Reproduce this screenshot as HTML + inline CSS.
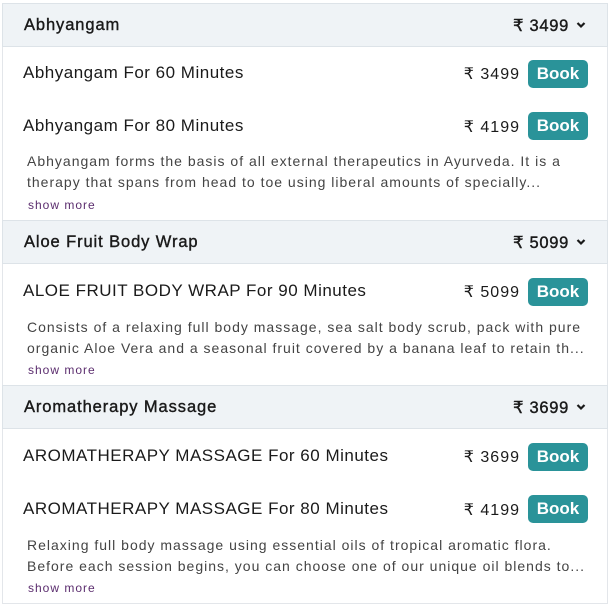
<!DOCTYPE html>
<html><head><meta charset="utf-8"><style>
*{margin:0;padding:0;box-sizing:border-box}
body{width:612px;height:607px;background:#fff;font-family:"Liberation Sans",sans-serif;color:#1a1a1a;position:relative;overflow:hidden}
.hd{position:absolute;left:2px;width:606px;height:44px;background:#eff3f6;border:1px solid #dde3e8}
.hd .t{position:absolute;left:21px;top:12px;font-size:16.5px;letter-spacing:0.9px;-webkit-text-stroke:0.4px #1a1a1a;color:#1a1a1a}
.hd .p{position:absolute;right:22px;top:12px;font-size:16.5px;letter-spacing:0.7px;-webkit-text-stroke:0.4px #1a1a1a}
.hd svg{position:absolute;right:21px;top:17px}
.bd{position:absolute;left:2px;width:606px;background:#fff;border-right:1px solid #e3e6ea;border-left:1px solid #e3e6ea}
.row{position:absolute;left:23px;font-size:17px;letter-spacing:0.5px}
.pr{position:absolute;right:92px;font-size:16px;letter-spacing:1px}
.bk{position:absolute;left:528px;width:60px;height:28px;background:#2a9399;color:#fff;border-radius:5px;font-weight:bold;font-size:17px;text-align:center;line-height:28px}
.ds{position:absolute;left:27px;font-size:14px;color:#444;line-height:21px;width:580px;white-space:nowrap;letter-spacing:1px}
.sm{position:absolute;left:28px;font-size:12px;color:#5b2d6e;letter-spacing:1px}
</style></head><body>
<div class="bd" style="top:46px;height:175px"></div>
<div class="bd" style="top:264px;height:121px"></div>
<div class="bd" style="top:429px;height:175px;border-bottom:1px solid #e3e6ea"></div>

<div class="hd" style="top:3px"><span class="t">Abhyangam</span><span class="p" style="right:38px">₹ 3499</span><svg width="10" height="8" viewBox="0 0 10 8"><path d="M1.5 2 L5 5.5 L8.5 2" stroke="#1a1a1a" stroke-width="2.2" fill="none"/></svg></div>
<div class="row" style="top:63px">Abhyangam For 60 Minutes</div><div class="pr" style="top:64px">₹ 3499</div><div class="bk" style="top:60px">Book</div>
<div class="row" style="top:116px">Abhyangam For 80 Minutes</div><div class="pr" style="top:117px">₹ 4199</div><div class="bk" style="top:112px">Book</div>
<div class="ds" style="top:151px">Abhyangam forms the basis of all external therapeutics in Ayurveda. It is a<br>therapy that spans from head to toe using liberal amounts of specially...</div>
<div class="sm" style="top:198px">show more</div>

<div class="hd" style="top:220px"><span class="t">Aloe Fruit Body Wrap</span><span class="p" style="right:38px">₹ 5099</span><svg width="10" height="8" viewBox="0 0 10 8"><path d="M1.5 2 L5 5.5 L8.5 2" stroke="#1a1a1a" stroke-width="2.2" fill="none"/></svg></div>
<div class="row" style="top:281px">ALOE FRUIT BODY WRAP For 90 Minutes</div><div class="pr" style="top:282px">₹ 5099</div><div class="bk" style="top:278px">Book</div>
<div class="ds" style="top:317px">Consists of a relaxing full body massage, sea salt body scrub, pack with pure<br>organic Aloe Vera and a seasonal fruit covered by a banana leaf to retain th...</div>
<div class="sm" style="top:363px">show more</div>

<div class="hd" style="top:385px"><span class="t">Aromatherapy Massage</span><span class="p" style="right:38px">₹ 3699</span><svg width="10" height="8" viewBox="0 0 10 8"><path d="M1.5 2 L5 5.5 L8.5 2" stroke="#1a1a1a" stroke-width="2.2" fill="none"/></svg></div>
<div class="row" style="top:446px">AROMATHERAPY MASSAGE For 60 Minutes</div><div class="pr" style="top:447px">₹ 3699</div><div class="bk" style="top:443px">Book</div>
<div class="row" style="top:499px">AROMATHERAPY MASSAGE For 80 Minutes</div><div class="pr" style="top:500px">₹ 4199</div><div class="bk" style="top:495px">Book</div>
<div class="ds" style="top:535px">Relaxing full body massage using essential oils of tropical aromatic flora.<br>Before each session begins, you can choose one of our unique oil blends to...</div>
<div class="sm" style="top:581px">show more</div>
</body></html>
